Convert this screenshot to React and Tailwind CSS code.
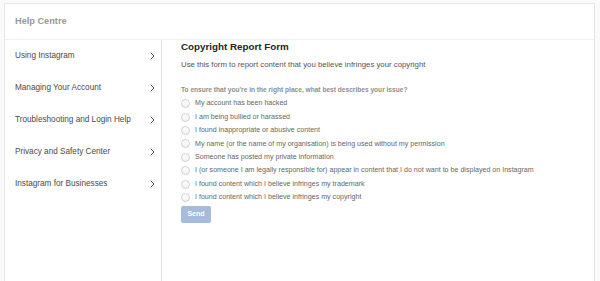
import React, { useState } from 'react';

const topics = [
    'Using Instagram',
    'Managing Your Account',
    'Troubleshooting and Login Help',
    'Privacy and Safety Center',
    'Instagram for Businesses',
];

const issues = [
    'My account has been hacked',
    'I am being bullied or harassed',
    'I found inappropriate or abusive content',
    'My name (or the name of my organisation) is being used without my permission',
    'Someone has posted my private information',
    'I (or someone I am legally responsible for) appear in content that I do not want to be displayed on Instagram',
    'I found content which I believe infringes my trademark',
    'I found content which I believe infringes my copyright',
];

function Chevron() {
    return (
        <svg width="5" height="8" viewBox="0 0 5 8" fill="none" className="shrink-0">
            <polyline points="0.8,0.8 4,4 0.8,7.2" stroke="#555" strokeWidth="1" />
        </svg>
    );
}

export default function App() {
    const [selected, setSelected] = useState(null);

    return (
        <div className="w-[600px] h-[281px] overflow-hidden bg-[#fafafa] pt-[3px] pl-[4px] pr-[5px] font-['Liberation_Sans',Arial,sans-serif]">
            <div className="bg-white border border-[#e6e6e6] h-[300px] flex flex-col">
                {/* header */}
                <div className="h-[36px] border-b border-[#efefef] flex items-center pl-[10px]">
                    <span className="text-[9.2px] font-bold text-[#999]">Help Centre</span>
                </div>

                <div className="flex flex-1">
                    {/* sidebar */}
                    <div className="w-[157px] border-r border-[#e6e6e6] shrink-0">
                        {topics.map((t) => (
                            <div key={t} className="h-[32px] flex items-center justify-between pl-[10px] pr-[6px]">
                                <span className="text-[8.2px] text-[#4a4a4a]">{t}</span>
                                <Chevron />
                            </div>
                        ))}
                    </div>

                    {/* form */}
                    <div className="flex-1 pl-[19px]">
                        <h1 className="text-[9.8px] font-bold leading-[13px] text-[#262626]">
                            Copyright Report Form
                        </h1>
                        <p className="mt-[7px] text-[7.8px] leading-[10px] text-[#555]">
                            Use this form to report content that you believe infringes your copyright
                        </p>
                        <p className="mt-[16px] text-[6.6px] font-bold leading-[8px] text-[#8e8e8e]">
                            To ensure that you're in the right place, what best describes your issue?
                        </p>
                        <div className="mt-[3px] flex flex-col">
                            {issues.map((label, i) => (
                                <label
                                    key={i}
                                    onClick={() => setSelected(i)}
                                    className="h-[13.4px] flex items-center gap-[5px] cursor-pointer"
                                >
                                    <span className="w-[9px] h-[9px] rounded-full border border-[#d0d0d0] bg-gradient-to-b from-white to-[#f1f1f1] flex items-center justify-center shrink-0">
                                        {selected === i && <span className="w-[4px] h-[4px] rounded-full bg-[#3897f0]" />}
                                    </span>
                                    <span className="text-[7.1px] text-[#666] whitespace-nowrap">{label}</span>
                                </label>
                            ))}
                        </div>
                        <button
                            disabled
                            className="mt-[2px] w-[30px] h-[17px] rounded-[2px] bg-[#a5badc] text-white text-[7px] font-bold flex items-center justify-center"
                        >
                            Send
                        </button>
                    </div>
                </div>
            </div>
        </div>
    );
}
